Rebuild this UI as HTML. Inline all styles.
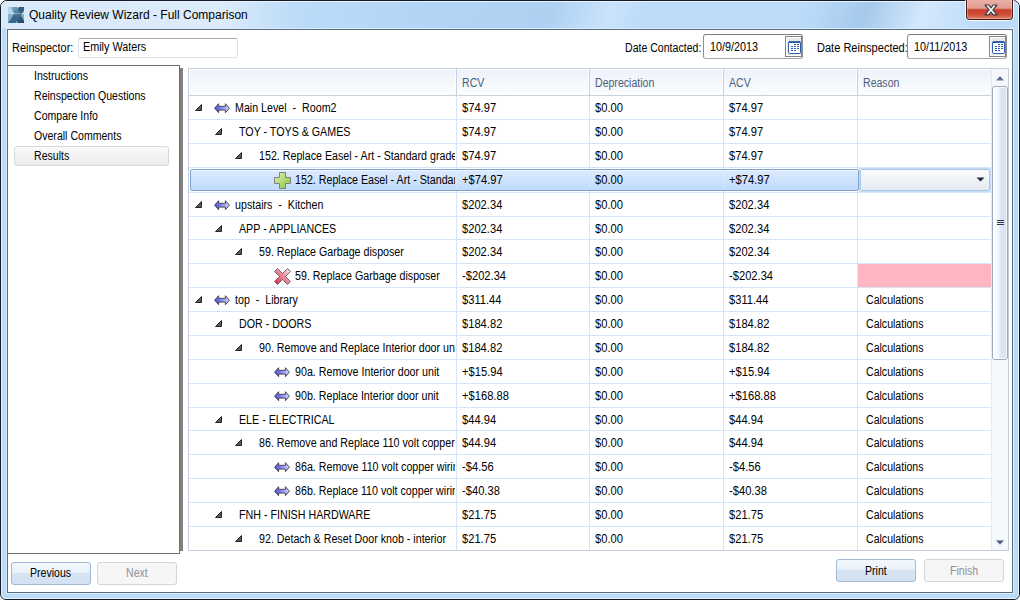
<!DOCTYPE html>
<html><head><meta charset="utf-8"><title>Quality Review Wizard</title><style>
*{margin:0;padding:0;box-sizing:border-box}
html,body{width:1020px;height:600px;overflow:hidden;background:#fff}
body{position:relative;font-family:"Liberation Sans",sans-serif;font-size:12px}
.t{position:absolute;white-space:pre;font-size:12px;line-height:14px;transform-origin:0 0}
.clip{position:absolute;overflow:hidden}
</style></head>
<body>
<div style="position:absolute;left:0;top:0;width:1020px;height:600px;border:1px solid #151c26;border-radius:7px 7px 6px 6px;background:#bbdbf9"></div><div style="position:absolute;left:1px;top:1px;width:1018px;height:598px;border:1px solid #e6f3ff;border-radius:6px 6px 5px 5px"></div><div style="position:absolute;left:2px;top:2px;width:1016px;height:26px;border-radius:5px 5px 0 0;background:linear-gradient(110deg,rgba(190,222,250,0) 0px,rgba(190,222,250,0) 290px,rgba(150,190,230,0.18) 380px,rgba(150,190,230,0.35) 520px,rgba(230,242,252,0.35) 575px,rgba(190,222,250,0) 610px,rgba(190,222,250,0) 760px,rgba(140,180,220,0.45) 815px,rgba(235,245,255,0.5) 870px,rgba(190,222,250,0.1) 930px)"></div><div style="position:absolute;left:2px;top:2px;width:300px;height:26px;border-radius:5px 0 0 0;background:linear-gradient(90deg,rgba(222,236,250,0.85) 0px,rgba(224,237,250,0.9) 220px,rgba(222,236,250,0.5) 255px,rgba(222,236,250,0) 295px)"></div><div style="position:absolute;left:6px;top:28px;width:1008px;height:566px;border:1px solid #dcefff"></div><div style="position:absolute;left:7px;top:29px;width:1006px;height:564px;border:1px solid #5c6c7e;background:#fff"></div><svg style="position:absolute;left:8px;top:7px" width="16" height="16" viewBox="0 0 16 16">
<defs><linearGradient id="ig1" x1="0" y1="0" x2="0.6" y2="1"><stop offset="0" stop-color="#7eabcc"/><stop offset="1" stop-color="#234d70"/></linearGradient>
<linearGradient id="ig2" x1="1" y1="0" x2="0" y2="1"><stop offset="0" stop-color="#2d5b80"/><stop offset="1" stop-color="#3c6d93"/></linearGradient></defs>
<rect x="0" y="0" width="16" height="16" fill="#86afcb"/>
<rect x="0" y="0" width="16" height="7" fill="#b6d3e7"/>
<polygon points="11,0 16,0 16,3.5 7.5,16 0,16" fill="url(#ig2)"/>
<polygon points="3,0 9,0 16,14 16,16 10,16" fill="url(#ig1)"/>
<rect x="3" y="6" width="13" height="1" fill="#ffffff" opacity="0.3"/>
</svg><div class="t" style="left:29px;top:8px;color:#000;transform:scaleX(1.0);">Quality Review Wizard - Full Comparison</div><div style="position:absolute;left:965px;top:0px;width:49px;height:21px;border:1px solid rgba(255,255,255,0.8);border-top:none;border-radius:0 0 5px 5px"></div><div style="position:absolute;left:966px;top:0px;width:47px;height:20px;border:1px solid #4a1a12;border-top:none;border-radius:0 0 4px 4px;background:linear-gradient(180deg,#e9b0a6 0px,#e09c90 8px,#c4402b 10px,#cf4a33 14px,#dd8068 19px)"></div><div style="position:absolute;left:967px;top:0px;width:45px;height:19px;border:1px solid rgba(255,255,255,0.3);border-top:none;border-radius:0 0 3px 3px"></div><svg style="position:absolute;left:984px;top:4px" width="14" height="12" viewBox="0 0 14 12">
<path d="M1,1 L4.8,1 L7,3.8 L9.2,1 L13,1 L8.9,5.8 L13,10.8 L9.2,10.8 L7,8 L4.8,10.8 L1,10.8 L5.1,5.8 Z" fill="#f6f6f6" stroke="#3c3f4e" stroke-width="1.2" stroke-linejoin="round"/>
</svg><div class="t" style="left:12px;top:41px;color:#000;transform:scaleX(0.91);">Reinspector:</div><div style="position:absolute;left:78px;top:38px;width:160px;height:20px;border:1px solid #dde3ea;border-top-color:#abadb3;border-radius:2px;background:#fff"></div><div class="t" style="left:83px;top:40px;color:#000;transform:scaleX(0.9);">Emily Waters</div><div class="t" style="left:625px;top:41px;color:#000;transform:scaleX(0.88);">Date Contacted:</div><div style="position:absolute;left:703px;top:34px;width:100px;height:25px;border:1px solid #8e8f8f;border-top-color:#7a7a7a;border-bottom-color:#a8a8a8;border-radius:3px;background:#fff"></div><div class="t" style="left:710px;top:40px;color:#000;transform:scaleX(0.9);">10/9/2013</div><div style="position:absolute;left:785px;top:36px;width:17px;height:21px;border:1px solid #7f848c;background:#fff"></div><div style="position:absolute;left:787px;top:38px;width:14px;height:17px;background:#e9e9e9"></div><svg style="position:absolute;left:788px;top:41px" width="13" height="13" viewBox="0 0 13 13">
<rect x="0.5" y="0.5" width="12" height="12" rx="1.2" fill="#fff" stroke="#2f5fa8"/>
<rect x="1" y="0" width="11" height="2" fill="#2f5fa8"/>
<g fill="#2f5fa8"><rect x="6" y="3" width="2" height="1"/><rect x="9" y="3" width="2" height="1"/>
<rect x="3" y="5" width="2" height="1"/><rect x="6" y="5" width="2" height="1"/><rect x="9" y="5" width="2" height="1"/>
<rect x="3" y="7" width="2" height="1"/><rect x="6" y="7" width="2" height="1"/><rect x="9" y="7" width="2" height="1"/>
<rect x="3" y="9" width="2" height="1"/><rect x="6" y="9" width="2" height="1"/></g>
</svg><div class="t" style="left:817px;top:41px;color:#000;transform:scaleX(0.92);">Date Reinspected:</div><div style="position:absolute;left:907px;top:34px;width:100px;height:25px;border:1px solid #8e8f8f;border-top-color:#7a7a7a;border-bottom-color:#a8a8a8;border-radius:3px;background:#fff"></div><div class="t" style="left:914px;top:40px;color:#000;transform:scaleX(0.9);">10/11/2013</div><div style="position:absolute;left:989px;top:36px;width:17px;height:21px;border:1px solid #7f848c;background:#fff"></div><div style="position:absolute;left:991px;top:38px;width:14px;height:17px;background:#e9e9e9"></div><svg style="position:absolute;left:992px;top:41px" width="13" height="13" viewBox="0 0 13 13">
<rect x="0.5" y="0.5" width="12" height="12" rx="1.2" fill="#fff" stroke="#2f5fa8"/>
<rect x="1" y="0" width="11" height="2" fill="#2f5fa8"/>
<g fill="#2f5fa8"><rect x="6" y="3" width="2" height="1"/><rect x="9" y="3" width="2" height="1"/>
<rect x="3" y="5" width="2" height="1"/><rect x="6" y="5" width="2" height="1"/><rect x="9" y="5" width="2" height="1"/>
<rect x="3" y="7" width="2" height="1"/><rect x="6" y="7" width="2" height="1"/><rect x="9" y="7" width="2" height="1"/>
<rect x="3" y="9" width="2" height="1"/><rect x="6" y="9" width="2" height="1"/></g>
</svg><div style="position:absolute;left:8px;top:65px;width:172px;height:489px;border:1px solid #6e6e6e;border-left:none;background:#fff"></div><div style="position:absolute;left:14px;top:146px;width:155px;height:20px;border:1px solid #d9d9d9;border-radius:3px;background:linear-gradient(180deg,#fafafa,#ebebeb)"></div><div class="t" style="left:34px;top:69px;color:#000;transform:scaleX(0.88);">Instructions</div><div class="t" style="left:34px;top:89px;color:#000;transform:scaleX(0.88);">Reinspection Questions</div><div class="t" style="left:34px;top:109px;color:#000;transform:scaleX(0.88);">Compare Info</div><div class="t" style="left:34px;top:129px;color:#000;transform:scaleX(0.88);">Overall Comments</div><div class="t" style="left:34px;top:149px;color:#000;transform:scaleX(0.88);">Results</div><div style="position:absolute;left:180px;top:68px;width:3px;height:483px;background:#808080"></div><div style="position:absolute;left:188px;top:68px;width:821px;height:483px;border:1px solid #c4cedb;background:#fff"></div><div style="position:absolute;left:189px;top:69px;width:802px;height:26px;background:linear-gradient(180deg,#edf1fa 0%,#f6f8fc 60%,#fcfdfe 100%)"></div><div style="position:absolute;left:189px;top:95px;width:802px;height:1px;background:#c7d2df"></div><div style="position:absolute;left:189px;top:69px;width:802px;height:1px;background:#fff"></div><div style="position:absolute;left:189px;top:69px;width:1px;height:26px;background:#fff"></div><div style="position:absolute;left:456px;top:69px;width:1px;height:26px;background:#c9d3e0"></div><div style="position:absolute;left:455px;top:69px;width:1px;height:26px;background:#fbfcfe"></div><div style="position:absolute;left:589px;top:69px;width:1px;height:26px;background:#c9d3e0"></div><div style="position:absolute;left:588px;top:69px;width:1px;height:26px;background:#fbfcfe"></div><div style="position:absolute;left:723px;top:69px;width:1px;height:26px;background:#c9d3e0"></div><div style="position:absolute;left:722px;top:69px;width:1px;height:26px;background:#fbfcfe"></div><div style="position:absolute;left:857px;top:69px;width:1px;height:26px;background:#c9d3e0"></div><div style="position:absolute;left:856px;top:69px;width:1px;height:26px;background:#fbfcfe"></div><div class="t" style="left:462px;top:76px;color:#4c5f7d;transform:scaleX(0.88);">RCV</div><div class="t" style="left:595px;top:76px;color:#4c5f7d;transform:scaleX(0.88);">Depreciation</div><div class="t" style="left:729px;top:76px;color:#4c5f7d;transform:scaleX(0.88);">ACV</div><div class="t" style="left:863px;top:76px;color:#4c5f7d;transform:scaleX(0.88);">Reason</div><div style="position:absolute;left:456px;top:96px;width:1px;height:454px;background:#d5e4f6"></div><div style="position:absolute;left:589px;top:96px;width:1px;height:454px;background:#d5e4f6"></div><div style="position:absolute;left:723px;top:96px;width:1px;height:454px;background:#d5e4f6"></div><div style="position:absolute;left:857px;top:96px;width:1px;height:454px;background:#d5e4f6"></div><div style="position:absolute;left:189px;top:119px;width:802px;height:1px;background:#d5e4f6"></div><div style="position:absolute;left:189px;top:143px;width:802px;height:1px;background:#d5e4f6"></div><div style="position:absolute;left:189px;top:167px;width:802px;height:1px;background:#d5e4f6"></div><div style="position:absolute;left:189px;top:192px;width:802px;height:1px;background:#d5e4f6"></div><div style="position:absolute;left:189px;top:216px;width:802px;height:1px;background:#d5e4f6"></div><div style="position:absolute;left:189px;top:239px;width:802px;height:1px;background:#d5e4f6"></div><div style="position:absolute;left:189px;top:263px;width:802px;height:1px;background:#d5e4f6"></div><div style="position:absolute;left:189px;top:287px;width:802px;height:1px;background:#d5e4f6"></div><div style="position:absolute;left:189px;top:311px;width:802px;height:1px;background:#d5e4f6"></div><div style="position:absolute;left:189px;top:335px;width:802px;height:1px;background:#d5e4f6"></div><div style="position:absolute;left:189px;top:359px;width:802px;height:1px;background:#d5e4f6"></div><div style="position:absolute;left:189px;top:383px;width:802px;height:1px;background:#d5e4f6"></div><div style="position:absolute;left:189px;top:407px;width:802px;height:1px;background:#d5e4f6"></div><div style="position:absolute;left:189px;top:430px;width:802px;height:1px;background:#d5e4f6"></div><div style="position:absolute;left:189px;top:454px;width:802px;height:1px;background:#d5e4f6"></div><div style="position:absolute;left:189px;top:478px;width:802px;height:1px;background:#d5e4f6"></div><div style="position:absolute;left:189px;top:502px;width:802px;height:1px;background:#d5e4f6"></div><div style="position:absolute;left:189px;top:526px;width:802px;height:1px;background:#d5e4f6"></div><svg style="position:absolute;left:195px;top:104px" width="7" height="7" viewBox="0 0 7 7">
<polygon points="0.5,6.5 6.5,0.5 6.5,6.5" fill="#5a5a5a" stroke="#262626" stroke-width="1" stroke-linejoin="round"/>
</svg><svg style="position:absolute;left:214px;top:103px" width="17" height="11" viewBox="0 0 17 11">
<defs><linearGradient id="ag214103" x1="0" x2="1"><stop offset="0" stop-color="#4848f2"/><stop offset="1" stop-color="#d4d4f8"/></linearGradient></defs>
<polygon points="0.6,5.2 4.6,0.7 4.6,3.3 11.4,3.3 11.4,0.7 15.4,5.2 11.4,9.7 11.4,7.1 4.6,7.1 4.6,9.7" fill="url(#ag214103)" stroke="#4a4a4a" stroke-width="1" stroke-linejoin="miter"/>
</svg><div class="clip" style="left:189px;top:96px;width:266px;height:23px"><div class="t" style="left:46px;top:5px;color:#000;transform:scaleX(0.89);">Main Level  -  Room2</div></div><div class="t" style="left:462px;top:101px;color:#000;transform:scaleX(0.93);">$74.97</div><div class="t" style="left:595px;top:101px;color:#000;transform:scaleX(0.93);">$0.00</div><div class="t" style="left:729px;top:101px;color:#000;transform:scaleX(0.93);">$74.97</div><svg style="position:absolute;left:215px;top:128px" width="7" height="7" viewBox="0 0 7 7">
<polygon points="0.5,6.5 6.5,0.5 6.5,6.5" fill="#5a5a5a" stroke="#262626" stroke-width="1" stroke-linejoin="round"/>
</svg><div class="clip" style="left:189px;top:120px;width:266px;height:23px"><div class="t" style="left:50px;top:5px;color:#000;transform:scaleX(0.89);">TOY - TOYS &amp; GAMES</div></div><div class="t" style="left:462px;top:125px;color:#000;transform:scaleX(0.93);">$74.97</div><div class="t" style="left:595px;top:125px;color:#000;transform:scaleX(0.93);">$0.00</div><div class="t" style="left:729px;top:125px;color:#000;transform:scaleX(0.93);">$74.97</div><svg style="position:absolute;left:235px;top:152px" width="7" height="7" viewBox="0 0 7 7">
<polygon points="0.5,6.5 6.5,0.5 6.5,6.5" fill="#5a5a5a" stroke="#262626" stroke-width="1" stroke-linejoin="round"/>
</svg><div class="clip" style="left:189px;top:144px;width:266px;height:23px"><div class="t" style="left:70px;top:5px;color:#000;transform:scaleX(0.89);">152. Replace Easel - Art - Standard grade</div></div><div class="t" style="left:462px;top:149px;color:#000;transform:scaleX(0.93);">$74.97</div><div class="t" style="left:595px;top:149px;color:#000;transform:scaleX(0.93);">$0.00</div><div class="t" style="left:729px;top:149px;color:#000;transform:scaleX(0.93);">$74.97</div><div style="position:absolute;left:190px;top:169px;width:669px;height:22px;border:1px solid #7da2ce;border-radius:2px;background:linear-gradient(180deg,#dcebfc,#c1dbfc)"></div><div style="position:absolute;left:191px;top:170px;width:667px;height:1px;background:rgba(255,255,255,0.5)"></div><div style="position:absolute;left:456px;top:170px;width:1px;height:20px;background:rgba(225,236,250,0.55)"></div><div style="position:absolute;left:589px;top:170px;width:1px;height:20px;background:rgba(225,236,250,0.55)"></div><div style="position:absolute;left:723px;top:170px;width:1px;height:20px;background:rgba(225,236,250,0.55)"></div><div style="position:absolute;left:859px;top:168px;width:132px;height:24px;border:1px solid #c5daf4;background:#fff"></div><div style="position:absolute;left:860px;top:169px;width:130px;height:22px;border:1px solid #a9c6ea;border-radius:2px;background:linear-gradient(180deg,#fbfbfc 0%,#f1f3f6 50%,#e4e9f0 100%)"></div><svg style="position:absolute;left:976px;top:177px" width="9" height="5" viewBox="0 0 9 5"><polygon points="0.5,0.5 8.5,0.5 4.5,4.5" fill="#1c2a48"/></svg><svg style="position:absolute;left:274px;top:172px" width="17" height="17" viewBox="0 0 17 17">
<defs><linearGradient id="pg" x1="0" y1="0" x2="1" y2="1"><stop offset="0" stop-color="#e2f5b0"/><stop offset="1" stop-color="#86c03a"/></linearGradient></defs>
<polygon points="5.5,0.5 11.5,0.5 11.5,5.5 16.5,5.5 16.5,11.5 11.5,11.5 11.5,16.5 5.5,16.5 5.5,11.5 0.5,11.5 0.5,5.5 5.5,5.5" fill="url(#pg)" stroke="#808080"/>
</svg><div class="clip" style="left:189px;top:168px;width:266px;height:24px"><div class="t" style="left:106px;top:5px;color:#000;transform:scaleX(0.89);">152. Replace Easel - Art - Standard grade</div></div><div class="t" style="left:462px;top:173px;color:#000;transform:scaleX(0.93);">+$74.97</div><div class="t" style="left:595px;top:173px;color:#000;transform:scaleX(0.93);">$0.00</div><div class="t" style="left:729px;top:173px;color:#000;transform:scaleX(0.93);">+$74.97</div><svg style="position:absolute;left:195px;top:201px" width="7" height="7" viewBox="0 0 7 7">
<polygon points="0.5,6.5 6.5,0.5 6.5,6.5" fill="#5a5a5a" stroke="#262626" stroke-width="1" stroke-linejoin="round"/>
</svg><svg style="position:absolute;left:214px;top:200px" width="17" height="11" viewBox="0 0 17 11">
<defs><linearGradient id="ag214200" x1="0" x2="1"><stop offset="0" stop-color="#4848f2"/><stop offset="1" stop-color="#d4d4f8"/></linearGradient></defs>
<polygon points="0.6,5.2 4.6,0.7 4.6,3.3 11.4,3.3 11.4,0.7 15.4,5.2 11.4,9.7 11.4,7.1 4.6,7.1 4.6,9.7" fill="url(#ag214200)" stroke="#4a4a4a" stroke-width="1" stroke-linejoin="miter"/>
</svg><div class="clip" style="left:189px;top:193px;width:266px;height:23px"><div class="t" style="left:46px;top:5px;color:#000;transform:scaleX(0.89);">upstairs  -  Kitchen</div></div><div class="t" style="left:462px;top:198px;color:#000;transform:scaleX(0.93);">$202.34</div><div class="t" style="left:595px;top:198px;color:#000;transform:scaleX(0.93);">$0.00</div><div class="t" style="left:729px;top:198px;color:#000;transform:scaleX(0.93);">$202.34</div><svg style="position:absolute;left:215px;top:225px" width="7" height="7" viewBox="0 0 7 7">
<polygon points="0.5,6.5 6.5,0.5 6.5,6.5" fill="#5a5a5a" stroke="#262626" stroke-width="1" stroke-linejoin="round"/>
</svg><div class="clip" style="left:189px;top:217px;width:266px;height:22px"><div class="t" style="left:50px;top:5px;color:#000;transform:scaleX(0.89);">APP - APPLIANCES</div></div><div class="t" style="left:462px;top:222px;color:#000;transform:scaleX(0.93);">$202.34</div><div class="t" style="left:595px;top:222px;color:#000;transform:scaleX(0.93);">$0.00</div><div class="t" style="left:729px;top:222px;color:#000;transform:scaleX(0.93);">$202.34</div><svg style="position:absolute;left:235px;top:248px" width="7" height="7" viewBox="0 0 7 7">
<polygon points="0.5,6.5 6.5,0.5 6.5,6.5" fill="#5a5a5a" stroke="#262626" stroke-width="1" stroke-linejoin="round"/>
</svg><div class="clip" style="left:189px;top:240px;width:266px;height:23px"><div class="t" style="left:70px;top:5px;color:#000;transform:scaleX(0.89);">59. Replace Garbage disposer</div></div><div class="t" style="left:462px;top:245px;color:#000;transform:scaleX(0.93);">$202.34</div><div class="t" style="left:595px;top:245px;color:#000;transform:scaleX(0.93);">$0.00</div><div class="t" style="left:729px;top:245px;color:#000;transform:scaleX(0.93);">$202.34</div><div style="position:absolute;left:858px;top:264px;width:133px;height:23px;background:#ffb6c1"></div><svg style="position:absolute;left:274px;top:268px" width="17" height="17" viewBox="0 0 17 17">
<defs><linearGradient id="xg" x1="0" y1="1" x2="1" y2="0"><stop offset="0" stop-color="#e41a40"/><stop offset="0.55" stop-color="#ee8ea2"/><stop offset="1" stop-color="#fce8ee"/></linearGradient></defs>
<polygon points="3.5,0.5 8.5,5.5 13.5,0.5 16.5,3.5 11.5,8.5 16.5,13.5 13.5,16.5 8.5,11.5 3.5,16.5 0.5,13.5 5.5,8.5 0.5,3.5" fill="url(#xg)" stroke="#6a6a6a"/>
</svg><div class="clip" style="left:189px;top:264px;width:266px;height:23px"><div class="t" style="left:106px;top:5px;color:#000;transform:scaleX(0.89);">59. Replace Garbage disposer</div></div><div class="t" style="left:462px;top:269px;color:#000;transform:scaleX(0.93);">-$202.34</div><div class="t" style="left:595px;top:269px;color:#000;transform:scaleX(0.93);">$0.00</div><div class="t" style="left:729px;top:269px;color:#000;transform:scaleX(0.93);">-$202.34</div><svg style="position:absolute;left:195px;top:296px" width="7" height="7" viewBox="0 0 7 7">
<polygon points="0.5,6.5 6.5,0.5 6.5,6.5" fill="#5a5a5a" stroke="#262626" stroke-width="1" stroke-linejoin="round"/>
</svg><svg style="position:absolute;left:214px;top:295px" width="17" height="11" viewBox="0 0 17 11">
<defs><linearGradient id="ag214295" x1="0" x2="1"><stop offset="0" stop-color="#4848f2"/><stop offset="1" stop-color="#d4d4f8"/></linearGradient></defs>
<polygon points="0.6,5.2 4.6,0.7 4.6,3.3 11.4,3.3 11.4,0.7 15.4,5.2 11.4,9.7 11.4,7.1 4.6,7.1 4.6,9.7" fill="url(#ag214295)" stroke="#4a4a4a" stroke-width="1" stroke-linejoin="miter"/>
</svg><div class="clip" style="left:189px;top:288px;width:266px;height:23px"><div class="t" style="left:46px;top:5px;color:#000;transform:scaleX(0.89);">top  -  Library</div></div><div class="t" style="left:462px;top:293px;color:#000;transform:scaleX(0.93);">$311.44</div><div class="t" style="left:595px;top:293px;color:#000;transform:scaleX(0.93);">$0.00</div><div class="t" style="left:729px;top:293px;color:#000;transform:scaleX(0.93);">$311.44</div><div class="t" style="left:866px;top:293px;color:#000;transform:scaleX(0.88);">Calculations</div><svg style="position:absolute;left:215px;top:320px" width="7" height="7" viewBox="0 0 7 7">
<polygon points="0.5,6.5 6.5,0.5 6.5,6.5" fill="#5a5a5a" stroke="#262626" stroke-width="1" stroke-linejoin="round"/>
</svg><div class="clip" style="left:189px;top:312px;width:266px;height:23px"><div class="t" style="left:50px;top:5px;color:#000;transform:scaleX(0.89);">DOR - DOORS</div></div><div class="t" style="left:462px;top:317px;color:#000;transform:scaleX(0.93);">$184.82</div><div class="t" style="left:595px;top:317px;color:#000;transform:scaleX(0.93);">$0.00</div><div class="t" style="left:729px;top:317px;color:#000;transform:scaleX(0.93);">$184.82</div><div class="t" style="left:866px;top:317px;color:#000;transform:scaleX(0.88);">Calculations</div><svg style="position:absolute;left:235px;top:344px" width="7" height="7" viewBox="0 0 7 7">
<polygon points="0.5,6.5 6.5,0.5 6.5,6.5" fill="#5a5a5a" stroke="#262626" stroke-width="1" stroke-linejoin="round"/>
</svg><div class="clip" style="left:189px;top:336px;width:266px;height:23px"><div class="t" style="left:70px;top:5px;color:#000;transform:scaleX(0.89);">90. Remove and Replace Interior door unit</div></div><div class="t" style="left:462px;top:341px;color:#000;transform:scaleX(0.93);">$184.82</div><div class="t" style="left:595px;top:341px;color:#000;transform:scaleX(0.93);">$0.00</div><div class="t" style="left:729px;top:341px;color:#000;transform:scaleX(0.93);">$184.82</div><div class="t" style="left:866px;top:341px;color:#000;transform:scaleX(0.88);">Calculations</div><svg style="position:absolute;left:274px;top:367px" width="17" height="11" viewBox="0 0 17 11">
<defs><linearGradient id="ag274367" x1="0" x2="1"><stop offset="0" stop-color="#4848f2"/><stop offset="1" stop-color="#d4d4f8"/></linearGradient></defs>
<polygon points="0.6,5.2 4.6,0.7 4.6,3.3 11.4,3.3 11.4,0.7 15.4,5.2 11.4,9.7 11.4,7.1 4.6,7.1 4.6,9.7" fill="url(#ag274367)" stroke="#4a4a4a" stroke-width="1" stroke-linejoin="miter"/>
</svg><div class="clip" style="left:189px;top:360px;width:266px;height:23px"><div class="t" style="left:106px;top:5px;color:#000;transform:scaleX(0.89);">90a. Remove Interior door unit</div></div><div class="t" style="left:462px;top:365px;color:#000;transform:scaleX(0.93);">+$15.94</div><div class="t" style="left:595px;top:365px;color:#000;transform:scaleX(0.93);">$0.00</div><div class="t" style="left:729px;top:365px;color:#000;transform:scaleX(0.93);">+$15.94</div><div class="t" style="left:866px;top:365px;color:#000;transform:scaleX(0.88);">Calculations</div><svg style="position:absolute;left:274px;top:391px" width="17" height="11" viewBox="0 0 17 11">
<defs><linearGradient id="ag274391" x1="0" x2="1"><stop offset="0" stop-color="#4848f2"/><stop offset="1" stop-color="#d4d4f8"/></linearGradient></defs>
<polygon points="0.6,5.2 4.6,0.7 4.6,3.3 11.4,3.3 11.4,0.7 15.4,5.2 11.4,9.7 11.4,7.1 4.6,7.1 4.6,9.7" fill="url(#ag274391)" stroke="#4a4a4a" stroke-width="1" stroke-linejoin="miter"/>
</svg><div class="clip" style="left:189px;top:384px;width:266px;height:23px"><div class="t" style="left:106px;top:5px;color:#000;transform:scaleX(0.89);">90b. Replace Interior door unit</div></div><div class="t" style="left:462px;top:389px;color:#000;transform:scaleX(0.93);">+$168.88</div><div class="t" style="left:595px;top:389px;color:#000;transform:scaleX(0.93);">$0.00</div><div class="t" style="left:729px;top:389px;color:#000;transform:scaleX(0.93);">+$168.88</div><div class="t" style="left:866px;top:389px;color:#000;transform:scaleX(0.88);">Calculations</div><svg style="position:absolute;left:215px;top:416px" width="7" height="7" viewBox="0 0 7 7">
<polygon points="0.5,6.5 6.5,0.5 6.5,6.5" fill="#5a5a5a" stroke="#262626" stroke-width="1" stroke-linejoin="round"/>
</svg><div class="clip" style="left:189px;top:408px;width:266px;height:22px"><div class="t" style="left:50px;top:5px;color:#000;transform:scaleX(0.89);">ELE - ELECTRICAL</div></div><div class="t" style="left:462px;top:413px;color:#000;transform:scaleX(0.93);">$44.94</div><div class="t" style="left:595px;top:413px;color:#000;transform:scaleX(0.93);">$0.00</div><div class="t" style="left:729px;top:413px;color:#000;transform:scaleX(0.93);">$44.94</div><div class="t" style="left:866px;top:413px;color:#000;transform:scaleX(0.88);">Calculations</div><svg style="position:absolute;left:235px;top:439px" width="7" height="7" viewBox="0 0 7 7">
<polygon points="0.5,6.5 6.5,0.5 6.5,6.5" fill="#5a5a5a" stroke="#262626" stroke-width="1" stroke-linejoin="round"/>
</svg><div class="clip" style="left:189px;top:431px;width:266px;height:23px"><div class="t" style="left:70px;top:5px;color:#000;transform:scaleX(0.89);">86. Remove and Replace 110 volt copper wiring</div></div><div class="t" style="left:462px;top:436px;color:#000;transform:scaleX(0.93);">$44.94</div><div class="t" style="left:595px;top:436px;color:#000;transform:scaleX(0.93);">$0.00</div><div class="t" style="left:729px;top:436px;color:#000;transform:scaleX(0.93);">$44.94</div><div class="t" style="left:866px;top:436px;color:#000;transform:scaleX(0.88);">Calculations</div><svg style="position:absolute;left:274px;top:462px" width="17" height="11" viewBox="0 0 17 11">
<defs><linearGradient id="ag274462" x1="0" x2="1"><stop offset="0" stop-color="#4848f2"/><stop offset="1" stop-color="#d4d4f8"/></linearGradient></defs>
<polygon points="0.6,5.2 4.6,0.7 4.6,3.3 11.4,3.3 11.4,0.7 15.4,5.2 11.4,9.7 11.4,7.1 4.6,7.1 4.6,9.7" fill="url(#ag274462)" stroke="#4a4a4a" stroke-width="1" stroke-linejoin="miter"/>
</svg><div class="clip" style="left:189px;top:455px;width:266px;height:23px"><div class="t" style="left:106px;top:5px;color:#000;transform:scaleX(0.89);">86a. Remove 110 volt copper wiring</div></div><div class="t" style="left:462px;top:460px;color:#000;transform:scaleX(0.93);">-$4.56</div><div class="t" style="left:595px;top:460px;color:#000;transform:scaleX(0.93);">$0.00</div><div class="t" style="left:729px;top:460px;color:#000;transform:scaleX(0.93);">-$4.56</div><div class="t" style="left:866px;top:460px;color:#000;transform:scaleX(0.88);">Calculations</div><svg style="position:absolute;left:274px;top:486px" width="17" height="11" viewBox="0 0 17 11">
<defs><linearGradient id="ag274486" x1="0" x2="1"><stop offset="0" stop-color="#4848f2"/><stop offset="1" stop-color="#d4d4f8"/></linearGradient></defs>
<polygon points="0.6,5.2 4.6,0.7 4.6,3.3 11.4,3.3 11.4,0.7 15.4,5.2 11.4,9.7 11.4,7.1 4.6,7.1 4.6,9.7" fill="url(#ag274486)" stroke="#4a4a4a" stroke-width="1" stroke-linejoin="miter"/>
</svg><div class="clip" style="left:189px;top:479px;width:266px;height:23px"><div class="t" style="left:106px;top:5px;color:#000;transform:scaleX(0.89);">86b. Replace 110 volt copper wiring</div></div><div class="t" style="left:462px;top:484px;color:#000;transform:scaleX(0.93);">-$40.38</div><div class="t" style="left:595px;top:484px;color:#000;transform:scaleX(0.93);">$0.00</div><div class="t" style="left:729px;top:484px;color:#000;transform:scaleX(0.93);">-$40.38</div><div class="t" style="left:866px;top:484px;color:#000;transform:scaleX(0.88);">Calculations</div><svg style="position:absolute;left:215px;top:511px" width="7" height="7" viewBox="0 0 7 7">
<polygon points="0.5,6.5 6.5,0.5 6.5,6.5" fill="#5a5a5a" stroke="#262626" stroke-width="1" stroke-linejoin="round"/>
</svg><div class="clip" style="left:189px;top:503px;width:266px;height:23px"><div class="t" style="left:50px;top:5px;color:#000;transform:scaleX(0.89);">FNH - FINISH HARDWARE</div></div><div class="t" style="left:462px;top:508px;color:#000;transform:scaleX(0.93);">$21.75</div><div class="t" style="left:595px;top:508px;color:#000;transform:scaleX(0.93);">$0.00</div><div class="t" style="left:729px;top:508px;color:#000;transform:scaleX(0.93);">$21.75</div><div class="t" style="left:866px;top:508px;color:#000;transform:scaleX(0.88);">Calculations</div><svg style="position:absolute;left:235px;top:535px" width="7" height="7" viewBox="0 0 7 7">
<polygon points="0.5,6.5 6.5,0.5 6.5,6.5" fill="#5a5a5a" stroke="#262626" stroke-width="1" stroke-linejoin="round"/>
</svg><div class="clip" style="left:189px;top:527px;width:266px;height:23px"><div class="t" style="left:70px;top:5px;color:#000;transform:scaleX(0.89);">92. Detach &amp; Reset Door knob - interior</div></div><div class="t" style="left:462px;top:532px;color:#000;transform:scaleX(0.93);">$21.75</div><div class="t" style="left:595px;top:532px;color:#000;transform:scaleX(0.93);">$0.00</div><div class="t" style="left:729px;top:532px;color:#000;transform:scaleX(0.93);">$21.75</div><div class="t" style="left:866px;top:532px;color:#000;transform:scaleX(0.88);">Calculations</div><div style="position:absolute;left:991px;top:69px;width:17px;height:481px;background:#f4f7fb;border-left:1px solid #e2eaf4"></div><svg style="position:absolute;left:996px;top:76px" width="8" height="5" viewBox="0 0 8 5"><defs><linearGradient id="ua" x1="0" y1="0" x2="0" y2="1"><stop offset="0" stop-color="#3d5070"/><stop offset="1" stop-color="#6a7d98"/></linearGradient></defs><polygon points="0,4.5 4,0.3 8,4.5" fill="url(#ua)"/></svg><svg style="position:absolute;left:996px;top:540px" width="8" height="5" viewBox="0 0 8 5"><defs><linearGradient id="da" x1="0" y1="0" x2="0" y2="1"><stop offset="0" stop-color="#3d5070"/><stop offset="1" stop-color="#6a7d98"/></linearGradient></defs><polygon points="0,0.5 8,0.5 4,4.7" fill="url(#da)"/></svg><div style="position:absolute;left:992px;top:86px;width:16px;height:274px;border:1px solid #9daabb;border-radius:3px;background:linear-gradient(90deg,#fdfeff 0%,#eef3f9 45%,#dde6f2 50%,#d8e2ef 100%)"></div><div style="position:absolute;left:993px;top:87px;width:14px;height:272px;border:1px solid rgba(255,255,255,0.7);border-radius:2px"></div><div style="position:absolute;left:997px;top:220px;width:7px;height:1px;background:#233a5e"></div><div style="position:absolute;left:997px;top:222px;width:7px;height:1px;background:#233a5e"></div><div style="position:absolute;left:997px;top:224px;width:7px;height:1px;background:#233a5e"></div><div style="position:absolute;left:11px;top:562px;width:80px;height:23px;border:1px solid #a0b7d6;border-radius:3px;background:linear-gradient(180deg,#f3f8fd 0%,#e9f1fa 45%,#d6e4f3 50%,#d3e1f2 100%)"></div><div class="t" style="left:30px;top:566px;color:#000;transform:scaleX(0.88);">Previous</div><div style="position:absolute;left:97px;top:562px;width:80px;height:23px;border:1px solid #d5d5d5;border-radius:3px;background:#f6f6f6"></div><div class="t" style="left:126px;top:566px;color:#8d9198;transform:scaleX(0.88);">Next</div><div style="position:absolute;left:836px;top:559px;width:80px;height:23px;border:1px solid #a0b7d6;border-radius:3px;background:linear-gradient(180deg,#f3f8fd 0%,#e9f1fa 45%,#d6e4f3 50%,#d3e1f2 100%)"></div><div class="t" style="left:865px;top:564px;color:#000;transform:scaleX(0.88);">Print</div><div style="position:absolute;left:924px;top:559px;width:80px;height:23px;border:1px solid #d5d5d5;border-radius:3px;background:#f6f6f6"></div><div class="t" style="left:950px;top:564px;color:#8d9198;transform:scaleX(0.88);">Finish</div>
</body></html>
